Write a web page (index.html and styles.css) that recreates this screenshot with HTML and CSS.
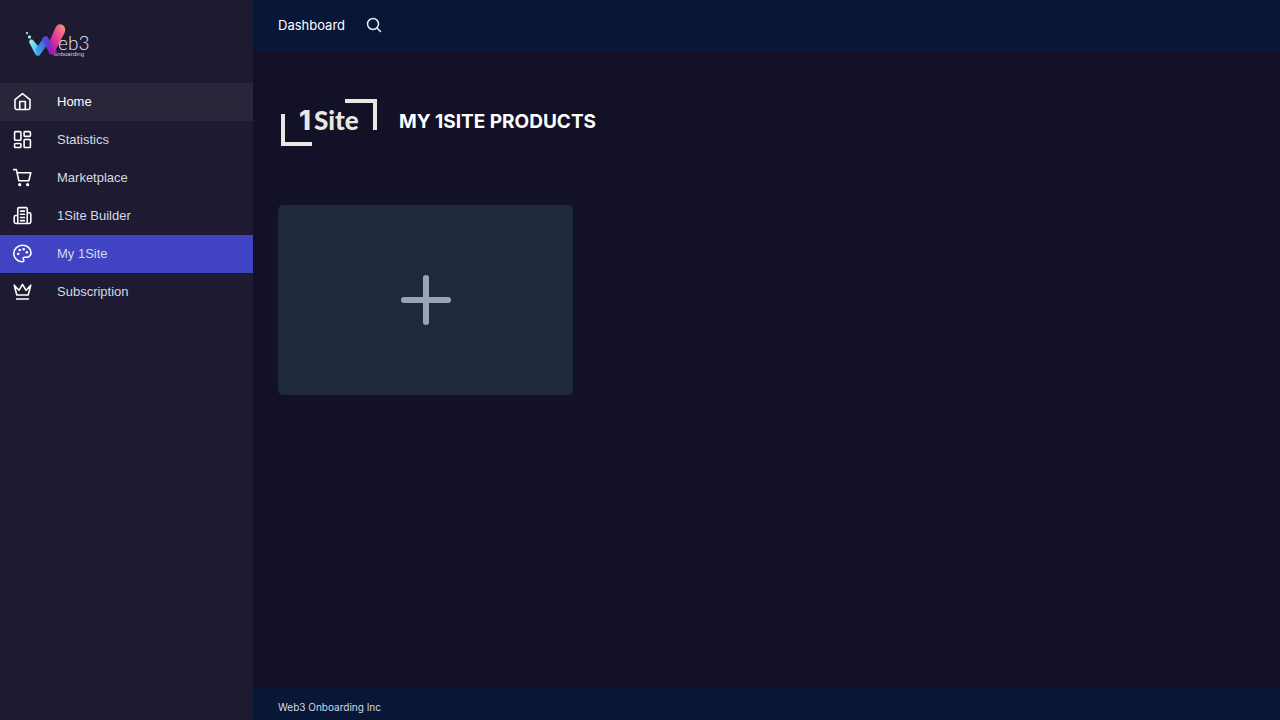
FILE: index.html
```html
<!DOCTYPE html>
<html lang="en">
<head>
<meta charset="utf-8">
<meta name="viewport" content="width=device-width, initial-scale=1">
<title>My 1Site</title>
<link rel="stylesheet" href="styles.css">
</head>
<body>
<div class="app">
  <aside class="sidebar">
    <a class="brand" href="#" aria-label="Web3 Onboarding">
      <svg width="66" height="36" viewBox="0 0 66 36">
        <defs>
          <linearGradient id="g1" x1="0" y1="0" x2="1" y2="1"><stop offset="0" stop-color="#9bf3f0"/><stop offset="1" stop-color="#28aee8"/></linearGradient>
          <linearGradient id="g2" x1="0" y1="1" x2="1" y2="0"><stop offset="0" stop-color="#35b9f0"/><stop offset="1" stop-color="#4b3ccb"/></linearGradient>
          <linearGradient id="g3" x1="0" y1="0" x2="1" y2="1"><stop offset="0" stop-color="#3f58dc"/><stop offset="1" stop-color="#a00fb0"/></linearGradient>
          <linearGradient id="g4" x1="0" y1="1" x2="1" y2="0"><stop offset="0" stop-color="#8e0fc0"/><stop offset=".45" stop-color="#e0329b"/><stop offset="1" stop-color="#ff9a78"/></linearGradient>
        </defs>
        <circle cx="2" cy="11" r="1.200" fill="#7cdce9"/>
        <circle cx="4.500" cy="15" r="1.700" fill="#8fe8ee"/>
        <path d="M5 18c1.500-1 3-.3 4 1.300l7 8.500-1.300 5.400c-2 1.300-3.600.4-4.600-1.200L4.500 21c-.5-1-.3-2.300.5-3z" fill="url(#g1)"/>
        <path d="M12 32.800c2 .7 3.400-.3 4.500-2l7.500-11-1.500-5.300c-2-.7-3.300.3-4.300 2L10.500 27z" fill="url(#g2)"/>
        <path d="M17 17c1.500-3 4.500-3.500 6.500-.5L32 29c-1.500 4-5.500 5.500-8 1.500z" fill="url(#g3)"/>
        <path d="M24 32.500c3 .6 4.500-1 6-3.500L39.500 11c1.500-4 .4-7.500-3-8.500-3-.7-5 1-6.200 3.500L25 18l1.500 8z" fill="url(#g4)"/>
        <text class="brand-name" x="33" y="28">eb3</text>
        <text class="brand-sub" x="29" y="34">onboarding</text>
      </svg>
    </a>
    <nav class="nav">
      <a class="nav-item hovered" href="#">
        <svg class="icon" viewBox="0 0 24 24"><path d="M2.500 9.500 12 2l9.500 7.500V20a2 2 0 0 1-2 2h-15a2 2 0 0 1-2-2z"/><path d="M8.500 22V12h7v10"/></svg>
        <span>Home</span></a>
      <a class="nav-item" href="#">
        <svg class="icon" viewBox="0 0 24 24"><rect x="2" y="2" width="8" height="11" rx="1"/><rect x="14" y="2" width="8" height="6" rx="1"/><rect x="14" y="12" width="8" height="10" rx="1"/><rect x="2" y="17" width="8" height="5" rx="1"/></svg>
        <span>Statistics</span></a>
      <a class="nav-item" href="#">
        <svg class="icon" viewBox="0 0 24 24"><path d="M.8 2h3.500l3 14H20l2.500-10H5.200"/><circle class="dot" cx="8.500" cy="21" r="2"/><circle class="dot" cx="18.500" cy="21" r="2"/></svg>
        <span>Marketplace</span></a>
      <a class="nav-item" href="#">
        <svg class="icon" viewBox="0 0 24 24"><path d="M6 22V3.500A1.500 1.500 0 0 1 7.500 2h9A1.500 1.500 0 0 1 18 3.500V22M6 12H3.500A2 2 0 0 0 1.500 14v6a2 2 0 0 0 2 2h17a2 2 0 0 0 2-2V10.500a2 2 0 0 0-2-2H18M9.500 6.500h5M9.500 10.500h5M9.500 14.500h5M9.500 18.500h5"/></svg>
        <span>1Site Builder</span></a>
      <a class="nav-item active" href="#" aria-current="page">
        <svg class="icon" viewBox="0 0 24 24"><path d="M12 1.500C6 1.500 1 6.200 1 12s5 10.500 11 10.500c1 0 1.700-.8 1.700-1.700 0-.5-.2-.9-.5-1.200-.3-.3-.4-.7-.4-1.100a1.700 1.700 0 0 1 1.700-1.700h2.300c3.200 0 6-2.500 6-5.600C22.800 5.500 18 1.500 12 1.500z"/><circle class="dot" cx="6.500" cy="12.500" r="1.600"/><circle class="dot" cx="8.500" cy="7.500" r="1.600"/><circle class="dot" cx="13.500" cy="6.500" r="1.600"/><circle class="dot" cx="17.500" cy="10.500" r="1.600"/></svg>
        <span>My 1Site</span></a>
      <a class="nav-item" href="#">
        <svg class="icon" viewBox="0 0 24 24"><path d="m1.500 4 3.300 12.500h14.400L22.500 4l-6 6.500L12 3l-4.500 7.500zM4.500 21.500h15"/></svg>
        <span>Subscription</span></a>
    </nav>
  </aside>
  <div class="page">
    <header class="topbar">
      <a class="crumb" href="#">Dashboard</a>
      <button class="search" type="button" aria-label="Search">
        <svg class="search-icon" viewBox="0 0 16 16"><circle cx="7" cy="7" r="5.500"/><path d="m11 11 3.500 3.500"/></svg>
      </button>
    </header>
    <main class="content">
      <div class="heading">
        <svg class="product-logo" width="99" height="48" viewBox="0 0 99 48" role="img" aria-label="1 Site">
          <path d="M67 3h30v29M5 16v30h29"/>
          <text class="logo-digit" x="21" y="32">1</text>
          <text x="36" y="32">Site</text>
        </svg>
        <h1>MY 1SITE PRODUCTS</h1>
      </div>
      <button class="add-card" type="button" aria-label="Add a site">
        <svg class="plus" viewBox="0 0 52 52"><path d="M26 4v44M4 26h44"/></svg>
      </button>
    </main>
    <footer class="footer">Web3 Onboarding Inc</footer>
  </div>
</div>
</body>
</html>
```
FILE: styles.css
```css
* { box-sizing: border-box; }
body { margin: 0; background: #131127; color: #fff; font-family: Inter, sans-serif; }
a { color: inherit; text-decoration: none; }
button { border: 0; padding: 0; color: inherit; cursor: pointer; }
svg { display: block; flex: none; }

.app { display: flex; min-height: 100vh; }
.sidebar { flex: 0 0 253px; background: #1e1a31; }
.brand { display: block; padding: 22px 25px 25px; }
.brand-name { font: 300 19px Lato, sans-serif; fill: #eeeaf4; }
.brand-sub { font: 6px "Liberation Sans", sans-serif; fill: #d4d0dc; }

.nav-item {
  display: flex; align-items: center; gap: 25px;
  height: 38px; padding: 0 13px 1px;
  font: 13px "Liberation Sans", Arial, sans-serif; color: #d3dae6;
}
.nav-item.hovered { background: #29253b; color: #fff; }
.nav-item.active { background: #4044c2; }
.icon {
  width: 19px; height: 19px; fill: none; stroke: #fff; stroke-width: 2;
  stroke-linejoin: round; stroke-linecap: round;
}
.icon .dot { fill: #fff; stroke: none; }

.page { flex: 1; min-width: 0; display: flex; flex-direction: column; }
.topbar { display: flex; align-items: center; gap: 21px; height: 51px; padding: 0 25px 1px; background: #081637; }
.crumb { font-size: 13px; }
.search { background: none; }
.search-icon { width: 16px; height: 16px; fill: none; stroke: #e8ebf2; stroke-width: 1.5; stroke-linecap: round; }

.content { flex: 1; padding: 47px 25px; }
.heading { display: flex; align-items: center; gap: 22px; }
.product-logo path { fill: none; stroke: #e9e7e2; stroke-width: 4; }
.product-logo text { font: 900 26px Lato, sans-serif; fill: #e9e7e2; }
.product-logo .logo-digit { font: 800 27px Inter, sans-serif; }
h1 { margin: 0; font-size: 19px; line-height: 24px; font-weight: 700; }
.add-card {
  display: grid; place-items: center; width: 295px; max-width: 100%; height: 190px;
  margin-top: 59px; border-radius: 5px; background: #1e293b;
}
.plus { width: 52px; height: 52px; fill: none; stroke: #9ca3b4; stroke-width: 6; stroke-linecap: round; }
.footer { height: 32px; padding: 0 25px; background: #081637; color: #d5d9e2; font-size: 10px; line-height: 38px; }
```
